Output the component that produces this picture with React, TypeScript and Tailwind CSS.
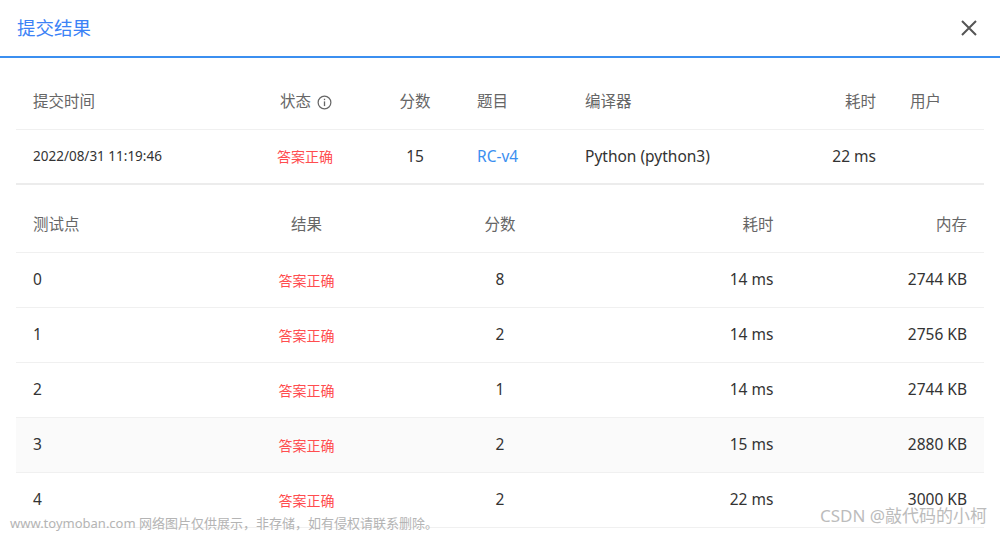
import React from "react";

const font = { fontFamily: '"Noto Sans", "Noto Sans CJK SC", sans-serif' };

const rows = [
  { id: "0", score: "8", time: "14 ms", mem: "2744 KB" },
  { id: "1", score: "2", time: "14 ms", mem: "2756 KB" },
  { id: "2", score: "1", time: "14 ms", mem: "2744 KB" },
  { id: "3", score: "2", time: "15 ms", mem: "2880 KB", hover: true },
  { id: "4", score: "2", time: "22 ms", mem: "3000 KB" },
];

export default function App() {
  return (
    <div className="relative w-[1000px] h-[533px] overflow-hidden bg-white" style={font}>
      <div className="flex items-center justify-between h-[56px] pl-[17px] pr-[22px]">
        <span className="text-[18.5px] text-[#3b82f6] leading-none">提交结果</span>
        <svg width="18" height="18" viewBox="0 0 18 18" className="text-[#555]">
          <path d="M2 2 L16 16 M16 2 L2 16" stroke="currentColor" strokeWidth="2" />
        </svg>
      </div>
      <div className="h-[2px] bg-[#3b8ff0]" />

      <div className="mx-[16px] mt-[17px]">
        <div className="flex h-[55px] items-center text-[15.5px] text-[#666] border-b border-[#f0f0f0]">
          <div className="w-[229px] pl-[17px]">提交时间</div>
          <div className="w-[120px] flex items-center justify-center gap-[6px] pl-[2px]">
            <span>状态</span>
            <svg width="15" height="15" viewBox="0 0 16 16" className="text-[#666]">
              <circle cx="8" cy="8" r="6.8" fill="none" stroke="currentColor" strokeWidth="1.3" />
              <rect x="7.3" y="6.8" width="1.4" height="5" fill="currentColor" />
              <rect x="7.3" y="4" width="1.4" height="1.5" fill="currentColor" />
            </svg>
          </div>
          <div className="w-[100px] text-center">分数</div>
          <div className="w-[103px] pl-[12px]">题目</div>
          <div className="w-[192px] pl-[17px]">编译器</div>
          <div className="w-[133px] pr-[17px] text-right">耗时</div>
          <div className="flex-1 pl-[17px]">用户</div>
        </div>
        <div className="flex h-[55px] items-center text-[15.5px] text-[#333] border-b-2 border-[#ececec]">
          <div className="w-[229px] pl-[17px] text-[13.5px]">2022/08/31 11:19:46</div>
          <div className="w-[120px] text-center text-[14px] text-[#ff4d4f]">答案正确</div>
          <div className="w-[100px] text-center">15</div>
          <div className="w-[103px] pl-[12px] text-[#3b8ff0]">RC-v4</div>
          <div className="w-[192px] pl-[17px]">Python (python3)</div>
          <div className="w-[133px] pr-[17px] text-right">22 ms</div>
          <div className="flex-1 pl-[17px]"></div>
        </div>
      </div>

      <div className="mx-[16px] mt-[13px]">
        <div className="grid grid-cols-5 h-[55px] items-center text-[15.5px] text-[#666] border-b border-[#f0f0f0]">
          <div className="pl-[17px]">测试点</div>
          <div className="text-center">结果</div>
          <div className="text-center">分数</div>
          <div className="text-right pr-[17px]">耗时</div>
          <div className="text-right pr-[17px]">内存</div>
        </div>
        {rows.map((r) => (
          <div
            key={r.id}
            className={`grid grid-cols-5 h-[55px] items-center text-[15.5px] text-[#333] border-b border-[#f0f0f0] ${
              r.hover ? "bg-[#fafafa]" : "bg-white"
            }`}
          >
            <div className="pl-[17px]">{r.id}</div>
            <div className="text-center text-[14px] text-[#ff4d4f]">答案正确</div>
            <div className="text-center">{r.score}</div>
            <div className="text-right pr-[17px]">{r.time}</div>
            <div className="text-right pr-[17px]">{r.mem}</div>
          </div>
        ))}
      </div>

      <div className="absolute left-[10px] top-[517px] text-[13px] text-[#b4b4b4] leading-none whitespace-nowrap">
        www.toymoban.com 网络图片仅供展示，非存储，如有侵权请联系删除。
      </div>
      <div className="absolute left-[820px] top-[507px] text-[17px] text-[#bcbcbc] leading-none whitespace-nowrap">
        CSDN @敲代码的小柯
      </div>
    </div>
  );
}
